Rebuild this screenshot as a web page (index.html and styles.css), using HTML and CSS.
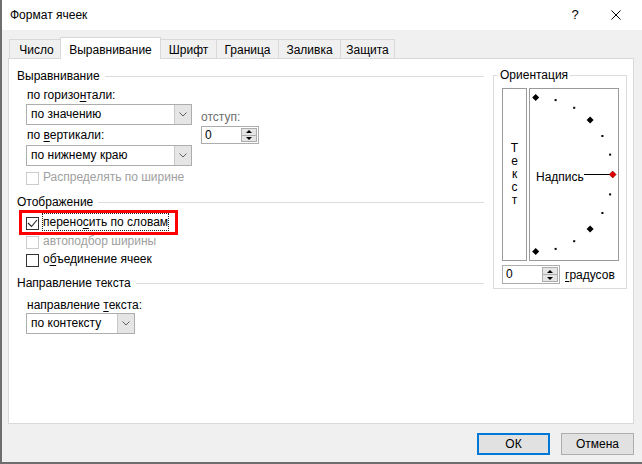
FILE: index.html
```html
<!DOCTYPE html>
<html lang="ru">
<head>
<meta charset="utf-8">
<title>Формат ячеек</title>
<link rel="stylesheet" href="styles.css">
</head>
<body>
<div class="window">
  <div class="titlebar">
    <span class="title">Формат ячеек</span>
    <span class="help">?</span>
    <span class="close"><svg width="10" height="10" viewBox="0 0 10 10"><path d="M0.5 0.5L9.5 9.5M9.5 0.5L0.5 9.5" stroke="#000" stroke-width="1" fill="none"/></svg></span>
  </div>
  <div class="tabs">
    <div class="tab t-num">Число</div>
    <div class="tab t-align active">Выравнивание</div>
    <div class="tab t-font">Шрифт</div>
    <div class="tab t-border">Граница</div>
    <div class="tab t-fill">Заливка</div>
    <div class="tab t-protect">Защита</div>
  </div>
  <div class="panel">
    <div class="left">
      <div class="group-head"><span>Выравнивание</span><i class="rule"></i></div>
      <div class="align-row">
        <div class="align-col">
          <div class="label">по горизо<u>н</u>тали:</div>
          <div class="select wide sel1"><span class="val">по значению</span><span class="arrow"><svg width="8" height="5" viewBox="0 0 8 5"><path d="M0.5 0.5L4 4L7.5 0.5" stroke="#606060" fill="none"/></svg></span></div>
          <div class="label l2">по <u>в</u>ертикали:</div>
          <div class="select wide sel2"><span class="val">по нижнему краю</span><span class="arrow"><svg width="8" height="5" viewBox="0 0 8 5"><path d="M0.5 0.5L4 4L7.5 0.5" stroke="#606060" fill="none"/></svg></span></div>
        </div>
        <div class="indent-col">
          <div class="label dim">отступ:</div>
          <div class="spin"><span class="spin-val">0</span><span class="spin-btns"><span class="half"><i class="tri-up"></i></span><span class="half lower"><i class="tri-down"></i></span></span></div>
        </div>
      </div>
      <div class="check disabled c-dist"><span class="box"></span><span class="text">Распределять по ширине</span></div>
      <div class="group-head h2"><span>Отображение</span><i class="rule"></i></div>
      <div class="check c-wrap highlight"><span class="box"><svg width="11" height="11" viewBox="0 0 11 11"><path d="M1 5L4.5 8.5L10 2" stroke="#222" stroke-width="1.1" fill="none"/></svg></span><span class="text focus">перено<u>с</u>ить по словам</span></div>
      <div class="check disabled c-fit"><span class="box"></span><span class="text">автоподбор ширины</span></div>
      <div class="check c-merge"><span class="box"></span><span class="text">о<u>б</u>ъединение ячеек</span></div>
      <div class="group-head h3"><span>Направление текста</span><i class="rule"></i></div>
      <div class="label l3">направление <u>т</u>екста:</div>
      <div class="select narrow"><span class="val">по контексту</span><span class="arrow"><svg width="8" height="5" viewBox="0 0 8 5"><path d="M0.5 0.5L4 4L7.5 0.5" stroke="#606060" fill="none"/></svg></span></div>
    </div>
    <fieldset class="orient">
      <legend>Ориентация</legend>
      <div class="orient-boxes">
        <div class="vtext"><span>Т</span><span>е</span><span>к</span><span>с</span><span>т</span></div>
        <div class="dial">
          <svg width="88" height="171" viewBox="0 0 88 171">
            <g fill="#000">
              <polygon points="5.7,5 9.2,8.5 5.7,12 2.2,8.5"/>
              <rect x="24.6" y="10.1" width="2" height="2"/>
              <rect x="43.2" y="17.8" width="2" height="2"/>
              <polygon points="60.1,27.6 63.6,31.1 60.1,34.6 56.6,31.1"/>
              <rect x="71.4" y="46" width="2" height="2"/>
              <rect x="79.1" y="64.6" width="2" height="2"/>
              <rect x="79.1" y="104.4" width="2" height="2"/>
              <rect x="71.4" y="123" width="2" height="2"/>
              <polygon points="60.1,136.4 63.6,139.9 60.1,143.4 56.6,139.9"/>
              <rect x="43.2" y="151.2" width="2" height="2"/>
              <rect x="24.6" y="158.9" width="2" height="2"/>
              <polygon points="5.7,159 9.2,162.5 5.7,166 2.2,162.5"/>
            </g>
            <line x1="54" y1="85.5" x2="80" y2="85.5" stroke="#000" stroke-width="1"/>
            <polygon points="82.7,82 86.2,85.5 82.7,89 79.2,85.5" fill="#e00000" stroke="#600" stroke-width="0.5"/>
            <text class="dial-text" x="6" y="91.5">Надпись</text>
          </svg>
        </div>
      </div>
      <div class="deg-row">
        <div class="spin deg"><span class="spin-val">0</span><span class="spin-btns"><span class="half"><i class="tri-up"></i></span><span class="half lower"><i class="tri-down"></i></span></span></div>
        <span class="deg-label"><u>г</u>радусов</span>
      </div>
    </fieldset>
  </div>
  <div class="buttons">
    <button class="btn ok">ОК</button>
    <button class="btn">Отмена</button>
  </div>
</div>
</body>
</html>
```
FILE: styles.css
```css
* { box-sizing: border-box; }
body {
  margin: 0;
  font-family: "Liberation Sans", Arial, sans-serif;
  font-size: 12px;
  line-height: 16px;
  color: #000;
  background: #fff;
}
u { text-decoration: underline; text-underline-offset: 2px; }

.window {
  width: 642px;
  height: 464px;
  border-left: 2px solid #6e6e6e;
  border-bottom: 2px solid #6e6e6e;
  background: #f0f0f0;
  display: flex;
  flex-direction: column;
}

.titlebar {
  flex: none;
  height: 30px;
  background: #fff;
  display: flex;
  align-items: center;
  padding-left: 8px;
}
.help {
  margin-left: auto;
  width: 14px;
  text-align: center;
  font-size: 13px;
}
.close {
  display: flex;
  margin-left: 29px;
  margin-right: 21px;
}

.tabs {
  flex: none;
  display: flex;
  align-items: flex-end;
  height: 29px;
  margin: 0 0 -1px 7px;
  position: relative;
  z-index: 1;
}
.tab {
  height: 19px;
  margin-bottom: 1px;
  margin-left: -1px;
  padding-top: 2px;
  border: 1px solid #d9d9d9;
  border-bottom: 0;
  background: #f0f0f0;
  text-align: center;
  white-space: nowrap;
}
.tab:first-child { margin-left: 0; }
.tab.active {
  height: 22px;
  margin-bottom: 0;
  padding-top: 4px;
  background: #fff;
  position: relative;
  z-index: 1;
}
.t-num { width: 52px; padding-left: 3px; }
.t-align { width: 101px; }
.t-font { width: 57px; }
.t-border { width: 63px; }
.t-fill { width: 63px; }
.t-protect { width: 55px; }

.panel {
  flex: none;
  width: 626px;
  height: 366px;
  margin-left: 6px;
  border: 1px solid #d9d9d9;
  background: #fff;
  display: flex;
  align-items: flex-start;
}

.left {
  flex: none;
  width: 475px;
  padding: 9px 0 0 8px;
}
.group-head {
  display: flex;
  align-items: center;
  height: 16px;
}
.group-head .rule {
  flex: 1;
  height: 1px;
  background: #dcdcdc;
  margin-left: 5px;
}
.group-head.h2 { margin-top: 7px; }
.group-head.h3 { margin-top: 6px; }

.label { height: 16px; white-space: nowrap; }
.label.l2 { margin-top: 2px; }
.label.l3 { margin-top: 6px; margin-left: 10px; }
.label.dim { color: #6d6d6d; }

.align-row {
  display: flex;
  margin-top: 3px;
  padding-left: 9px;
}
.align-col { width: 166px; }
.align-col .label { padding-left: 1px; }

.select {
  display: flex;
  height: 21px;
  border: 1px solid #adadad;
  background: #fff;
}
.select.wide { width: 166px; }
.select.narrow { width: 109px; margin-left: 9px; }
.sel1 { margin-top: 1px; }
.sel2 { margin-top: 2px; }
.select .val {
  flex: 1;
  padding-left: 4px;
  line-height: 19px;
  white-space: nowrap;
}
.select .arrow {
  width: 17px;
  background: #e5e5e5;
  border-left: 1px solid #c8c8c8;
  display: flex;
  align-items: center;
  justify-content: center;
}

.indent-col { margin: 22px 0 0 9px; }

.spin {
  display: flex;
  width: 58px;
  height: 18px;
  border: 1px solid #adadad;
  background: #fff;
  margin-top: 1px;
}
.spin.deg { margin-top: 0; height: 19px; }
.spin-val {
  flex: 1;
  padding-left: 3px;
  line-height: 16px;
}
.spin-btns {
  width: 16px;
  margin: 1px;
  border: 1px solid #adadad;
  background: #e5e5e5;
  display: flex;
  flex-direction: column;
}
.spin-btns .half {
  flex: 1;
  display: flex;
  align-items: center;
  justify-content: center;
}
.spin-btns .lower { border-top: 1px solid #adadad; }
.tri-up {
  width: 0;
  height: 0;
  border-left: 3px solid transparent;
  border-right: 3px solid transparent;
  border-bottom: 3px solid #000;
}
.tri-down {
  width: 0;
  height: 0;
  border-left: 3px solid transparent;
  border-right: 3px solid transparent;
  border-top: 3px solid #000;
}

.check {
  display: flex;
  align-items: flex-start;
  height: 18px;
  margin-left: 9px;
  width: max-content;
  position: relative;
}
.check .box {
  width: 13px;
  height: 13px;
  margin-top: 3px;
  margin-right: 4px;
  border: 1px solid #333;
  background: #fff;
  display: flex;
}
.check .text { white-space: nowrap; }
.check.disabled .box { border-color: #cccccc; }
.check.disabled .text { color: #a0a0a0; }
.c-dist { margin-top: 3px; }
.c-wrap { margin-top: 4px; }
.c-fit { margin-top: 1px; }
.check .focus { outline: 1px dotted #222; }
.highlight::after {
  content: "";
  position: absolute;
  left: -7px;
  right: -10px;
  top: -4px;
  bottom: -3px;
  border: 3px solid #ff0000;
}

.orient {
  flex: none;
  width: 134px;
  min-width: 0;
  margin: 8px 0 0 9px;
  padding: 5px 7px 4px 8px;
  border: 1px solid #dcdcdc;
}
.orient legend {
  padding: 0 2px;
  margin-left: -4px;
  line-height: 16px;
}
.orient-boxes {
  display: flex;
  gap: 2px;
  height: 173px;
}
.vtext {
  width: 25px;
  border: 1px solid #9a9a9a;
  display: flex;
  flex-direction: column;
  align-items: center;
  justify-content: center;
  line-height: 13px;
}
.dial {
  width: 90px;
  border: 1px solid #9a9a9a;
}
.dial svg { display: block; }
.dial-text {
  font-family: "Liberation Sans", Arial, sans-serif;
  font-size: 12px;
  fill: #000;
}
.deg-row {
  display: flex;
  align-items: center;
  margin-top: 4px;
}
.deg-label { margin-left: 5px; }

.buttons {
  display: flex;
  justify-content: flex-end;
  gap: 11px;
  margin-top: 9px;
  padding-right: 8px;
}
.btn {
  width: 73px;
  height: 22px;
  padding: 0;
  border: 1px solid #adadad;
  background: #e1e1e1;
  font: inherit;
  color: #000;
}
.btn.ok { border: 2px solid #0078d7; }
```
